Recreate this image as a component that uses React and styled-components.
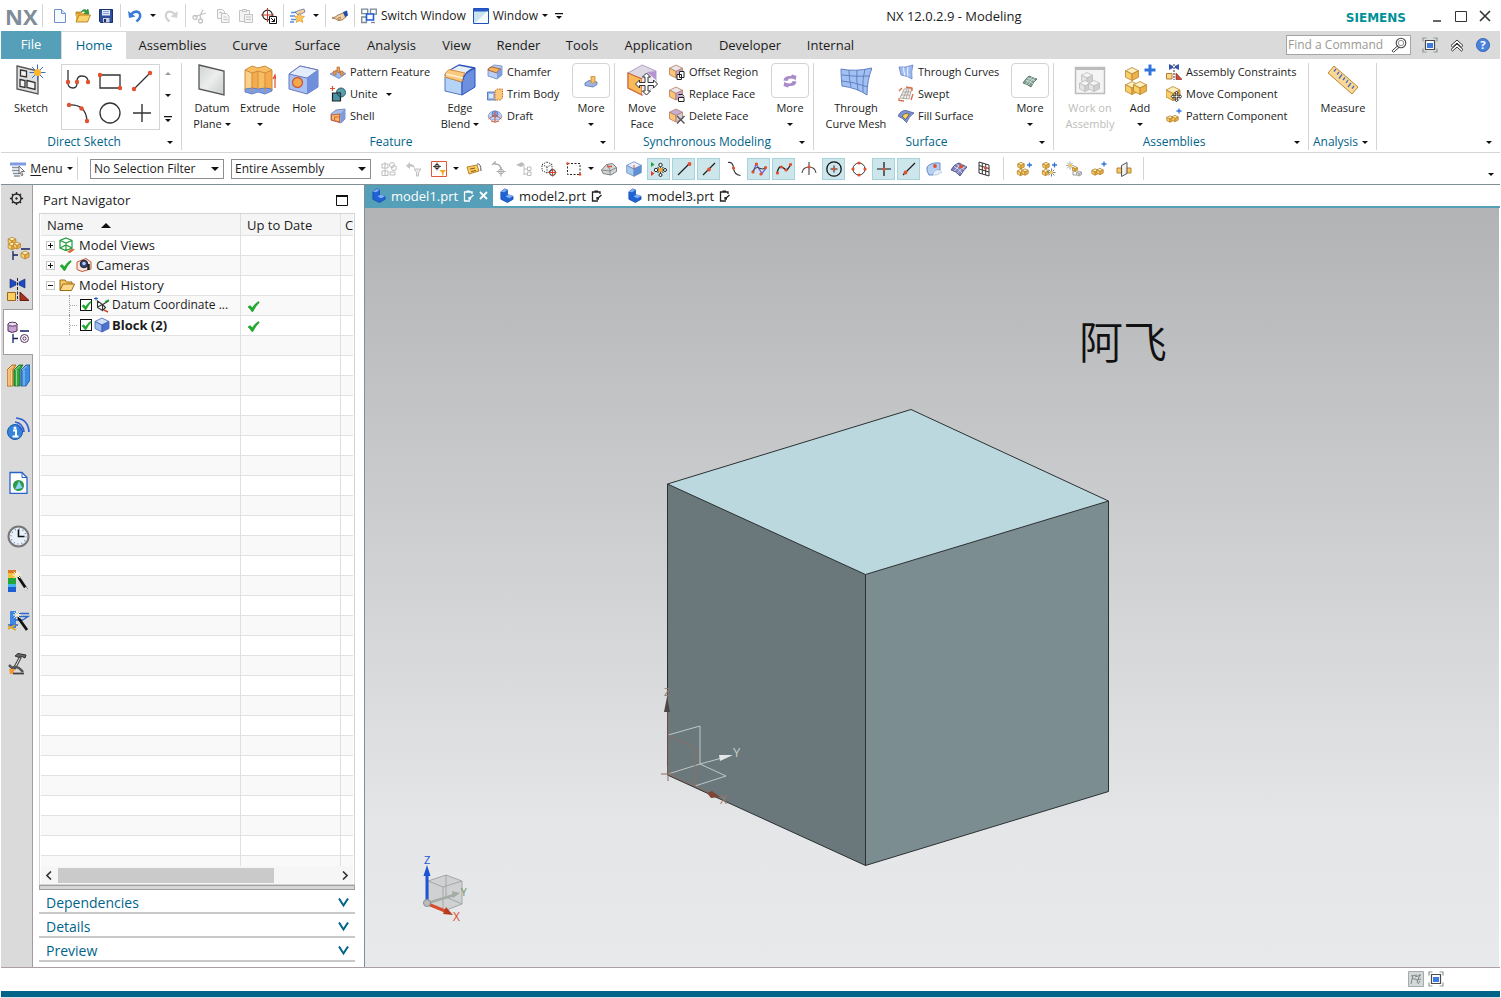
import { Fragment } from "react";
import styled, { createGlobalStyle, css } from "styled-components";

const colors = {
  teal: "#559fb8",
  link: "#00648a",
  bar: "#dadada",
  line: "#d4d4d4",
  frame: "#7f9094",
  text: "#1c1c1c",
};

const GlobalStyle = createGlobalStyle`
  * {
    box-sizing: border-box;
  }

  body {
    margin: 0;
    background: #fff;
    color: ${colors.text};
    font-family: "Open Sans", "Noto Sans", "Noto Sans CJK SC", sans-serif;
    font-size: 12px;
    line-height: 16px;
  }

  button,
  input,
  select {
    font: inherit;
    color: inherit;
  }

  button {
    padding: 0;
    border: 0;
    background: none;
    white-space: nowrap;
  }

  svg {
    display: block;
    flex: none;
  }
`;

/* ---------- drawing helpers ---------- */

const Svg = ({ s = 16, v = 16, children }) => (
  <svg width={s} height={s} viewBox={`0 0 ${v} ${v}`} fill="none" aria-hidden="true">
    {children}
  </svg>
);

const Iso = ({ x, y, r, c = ["#fdeebb", "#f9cf6a", "#eeb04a"], k = "#b8842c", w = 0.8 }) => (
  <g stroke={k} strokeWidth={w} strokeLinejoin="round">
    <path d={`M${x} ${y - r}l${r} ${r / 2}l${-r} ${r / 2}l${-r} ${-r / 2}z`} fill={c[0]} />
    <path d={`M${x - r} ${y - r / 2}l${r} ${r / 2}v${r}l${-r} ${-r / 2}z`} fill={c[1]} />
    <path d={`M${x + r} ${y - r / 2}l${-r} ${r / 2}v${r}l${r} ${-r / 2}z`} fill={c[2]} />
  </g>
);

const grey = ["#f4f4f4", "#e4e4e4", "#cfcfcf"];

const Dot = ({ x, y, r = 1.6 }) => <circle cx={x} cy={y} r={r} fill="#e2502d" />;

const Plus = ({ x, y, r = 2.5, c = "#2f74dd", w = 1.3 }) => (
  <path d={`M${x - r} ${y}h${2 * r}M${x} ${y - r}v${2 * r}`} stroke={c} strokeWidth={w} />
);

/* four-way move arrow, drawn on a 22 unit grid */
const Four = ({ x, y, r }) => (
  <g transform={`translate(${x} ${y}) scale(${r / 11})`}>
    <path
      d="M0-11L4-7H1.500V-1.500H7V-4L11 0L7 4V1.500H1.500V7H4L0 11L-4 7H-1.500V1.500H-7V4L-11 0L-7-4V-1.500H-1.500V-7H-4z"
      fill="#fff"
      stroke="#333"
      strokeWidth={11 / r}
      strokeLinejoin="round"
    />
  </g>
);

const Burst = ({ x, y, r, c = "#ffb52e", k = "#3a6fc0" }) => (
  <g transform={`translate(${x} ${y})`}>
    <path
      d={`M0 ${-r}V${r}M${-r} 0H${r}M${-r * 0.7} ${-r * 0.7}L${r * 0.7} ${r * 0.7}M${r * 0.7} ${-r * 0.7}L${-r * 0.7} ${r * 0.7}`}
      stroke={k}
      strokeWidth="1"
    />
    <circle r={r * 0.45} fill={c} />
  </g>
);

const Check = ({ s = 13 }) => (
  <Svg s={s} v={13}>
    <path d="M1 7l2-1.500 2.400 2.300Q8 3.500 11.500 1.500l.8.9Q8.500 6 6 11.500H4.800Q3.300 8.800 1 7z" fill="#1fae2b" stroke="#128a1e" strokeWidth=".5" />
  </Svg>
);

const Caret = ({ w = 6 }) => (
  <svg width={w} height={w / 2} viewBox="0 0 6 3" aria-hidden="true">
    <path d="M0 0h6L3 3z" fill="#111" />
  </svg>
);

const CaretBar = () => (
  <svg width="8" height="6" viewBox="0 0 8 6" aria-hidden="true">
    <path d="M0 0h8v1.200H0zM1 3h6L4 6z" fill="#111" />
  </svg>
);

/* ---------- icons ---------- */

const icons = {
  newFile: (
    <>
      <path d="M2.500 1.500h7l4 4v9h-11z" fill="#f7faff" stroke="#6d8fd0" />
      <path d="M9.500 1.500v4h4" fill="#d6e3fb" stroke="#6d8fd0" />
    </>
  ),
  open: (
    <>
      <path d="M1 4h5l1 1.500h6V8H1z" fill="#d99b28" stroke="#a87418" strokeWidth=".7" />
      <path d="M1 14V6h3l2-1h7v9z" fill="#f0b640" />
      <path d="M1 14l3-7h11.500l-3 7z" fill="#fbd36d" stroke="#a87418" strokeWidth=".8" />
      <path d="M6 4q3-4 5.500-1.500L13 1l1 5-5-.5 1.500-1.300Q9 2.500 6 4z" fill="#2ba13a" stroke="#1b6b25" strokeWidth=".5" />
    </>
  ),
  save: (
    <>
      <path d="M1.500 1.500h13v13h-12l-1-1z" fill="#2d4f9e" stroke="#172f6b" />
      <path d="M4 2h8v5.500H4z" fill="#dfe9f8" />
      <path d="M5 3.500h6M5 5.500h6" stroke="#8da6cf" />
      <path d="M5 10h6.500v4.500H5z" fill="#c9ced8" />
      <path d="M6 11h2v3H6z" fill="#172f6b" />
    </>
  ),
  undo: (
    <>
      <path d="M4 6.500q4-4.500 8-2 3.500 4-2.500 9" stroke="#3b7ad8" strokeWidth="2.600" />
      <path d="M1 3l1 7 6.500-1.500z" fill="#3b7ad8" />
    </>
  ),
  redo: (
    <>
      <path d="M12 6.500q-4-4.500-8-2-3.500 4 2.500 9" stroke="#d2d2d2" strokeWidth="2.300" />
      <path d="M15 3l-1 7-6.500-1.500z" fill="#d2d2d2" />
    </>
  ),
  cut: (
    <g stroke="#c4c4c4" strokeWidth="1.300">
      <path d="M8 8L11 1.500M3 8.500l11-3.500M8 8l1 3" />
      <circle cx="3" cy="9.500" r="2" />
      <circle cx="8.500" cy="13" r="2" />
    </g>
  ),
  copy: (
    <g stroke="#c4c4c4" fill="#f6f6f6">
      <path d="M2.500 1.500h5l2 2v7h-7z" />
      <path d="M6.500 5.500h5l2.500 2.500v6.500H6.500z" />
      <path d="M8.500 9h3M8.500 11.500h4M4 4.500h3" />
    </g>
  ),
  paste: (
    <g stroke="#c4c4c4" fill="#f3f3f3">
      <path d="M1.500 2.500h10v11h-10z" />
      <path d="M4.500 1.500h4v2h-4z" />
      <path d="M6.500 6.500h8v8h-8z" />
      <path d="M8 9h5M8 11.500h5" />
    </g>
  ),
  target: (
    <>
      <circle cx="6.500" cy="7" r="4.800" stroke="#222" strokeWidth="1.200" />
      <path d="M6.500 0v14M0 7h13" stroke="#c63c2c" />
      <path d="M8.500 8.500h7v7h-7z" fill="#fff" stroke="#111" />
      <path d="M10 10l3.500 3.500m0-3v3h-3" stroke="#111" />
    </>
  ),
  star: (
    <>
      <path d="M1 4.500h7M0 8h5M1 11.500h5M0 14h4" stroke="#5b8fdc" strokeWidth="1.300" />
      <path d="M5 4l5-2 4-1 1 3-4 2-3 1z" fill="#f3cf9b" stroke="#4a68a8" strokeWidth=".7" />
      <path d="M9.500 5l1.500 3 3.500.4-2.500 2.400.8 3.700-3.300-1.800-3.300 1.800.8-3.700L4.500 8.400 8 8z" fill="#ffc95c" stroke="#d78a17" strokeWidth=".6" />
    </>
  ),
  hand: (
    <>
      <path d="M0 10q4-1 6-3l5-2 3 1v3l-4 3-4 .5-2-1.500z" fill="#f2d2a4" stroke="#8a6336" strokeWidth=".8" />
      <path d="M11 4l4-1.500 1 5L13 9z" fill="#1d4ea8" />
      <path d="M5 10.500l4-1.500M6 12l3-1.500" stroke="#8a6336" strokeWidth=".7" />
    </>
  ),
  switchWin: (
    <>
      <path d="M.7 1.200h6v4.500h-6zM9.500 1.200h5.800v5H9.500zM.7 9H5.500v5.500H.7z" stroke="#7a8898" strokeWidth="1.300" />
      <path d="M5.500 6h7v6h-7z" fill="#fff" stroke="#1f5fd1" strokeWidth="1.600" />
      <path d="M10 14.500h4" stroke="#7a8898" strokeWidth="1.300" />
    </>
  ),
  windowIcon: (
    <>
      <path d="M.5.5h15v15H.5z" fill="#c9e4ee" stroke="#1f4fc0" />
      <path d="M1 1h14v2.500H1z" fill="#2759c7" />
      <path d="M2 15L14 3.500h1V15z" fill="#f4fafc" />
    </>
  ),
  search: (
    <>
      <circle cx="10" cy="6" r="4.800" fill="#fff" stroke="#444" strokeWidth="1.100" />
      <circle cx="10" cy="6" r="2.700" stroke="#777" strokeWidth=".8" />
      <path d="M7 8.500L1 13.800l1.500 1.500L8.500 10" stroke="#444" />
    </>
  ),
  full: (
    <>
      <path d="M1 4.500V1h3.500M11.500 1H15v3.500M1 11.500V15h3.500M11.500 15H15v-3.500" stroke="#8c9b98" strokeWidth="1.200" />
      <path d="M3.500 3.500h9v9h-9z" fill="#fff" stroke="#4a4a4a" strokeWidth="1.200" />
      <path d="M5 6h6v5H5z" fill="#3d7be0" />
    </>
  ),
  up: <path d="M2 8.500L8 3l6 5.500-1.600 1.600L8 6 3.600 10zM2 12.500L8 7l6 5.500-1.600 1.600L8 10l-4.400 4z" fill="#fff" stroke="#333" />,
  pattern: (
    <>
      <path d="M0 10l7-4 9 3.500-7 5z" fill="#9db9ee" stroke="#5b78ba" strokeWidth=".7" />
      <path d="M3.500 10.500V7H6v4zM7 8V3h2.500v6zM10.500 11V7H13v4.500z" fill="#f59a45" stroke="#bb6a2a" strokeWidth=".7" />
    </>
  ),
  unite: (
    <>
      <circle cx="11" cy="6.500" r="4.500" fill="#5b9fae" stroke="#2f6270" />
      <path d="M2.500 7h8v8h-8z" fill="#4893a6" stroke="#222" strokeWidth="1.200" />
      <path d="M7 7h3.500v4Q7.500 10 7 7z" fill="#387f90" stroke="#222" strokeWidth=".6" />
      <Plus x={2.5} y={2.5} r={2.5} c="#e2502d" w={1.2} />
    </>
  ),
  shell: (
    <>
      <path d="M1 6l5-4 9-1v10l-4 4-10-3z" fill="#a8bdec" stroke="#6878b0" strokeWidth=".8" />
      <path d="M10 6l5-5v10l-4 4z" fill="#7f9bdc" />
      <path d="M1.500 7l8-1v8l-8-2z" fill="#f9bb6c" stroke="#cc6037" strokeWidth="1.100" />
      <path d="M4.500 12V9h4" stroke="#cc6037" />
    </>
  ),
  chamfer: (
    <>
      <path d="M1 5l6-4 8 1v9l-5 4-9-3z" fill="#b9cff5" stroke="#5a76b4" strokeWidth=".7" />
      <path d="M1 6q1-3 4-3l9 2q-4 1-4 4z" fill="#f9b25e" stroke="#9f5a2c" strokeWidth=".9" />
      <path d="M10 9q1-3 5-4v6l-5 4z" fill="#7d9ee2" />
    </>
  ),
  trim: (
    <>
      <path d="M.5 6h9v8h-9z" fill="#9bb8ed" stroke="#4867ac" strokeWidth=".8" />
      <path d="M2 8h4v4H2z" fill="#dfe9fb" />
      <path d="M8 5l2-2h5.500v9l-2 2H8z" fill="#fbc878" stroke="#c1642a" strokeDasharray="1.500 1" />
    </>
  ),
  draft: (
    <>
      <path d="M1 9q1-6 7-6t7 6l-3 3H4z" fill="#c0d1f4" stroke="#7d8fc4" strokeWidth=".8" />
      <circle cx="8" cy="6" r="3" fill="#7e9fe0" stroke="#5670b5" strokeWidth=".7" />
      <path d="M8 4v10M1.500 11l6-4M14.500 11l-6-4M4 13q4 2.500 8 0" stroke="#cf5a36" strokeWidth="1" />
    </>
  ),
  moreFeature: (
    <>
      <path d="M2 10l4-2.500 8 1.500v2.500L10 14l-8-1.500z" fill="#9cb5e8" stroke="#5471b3" strokeWidth=".8" />
      <path d="M8 10V3.500h4V9q-2 2-4 1z" fill="#fbc06c" stroke="#c48530" strokeWidth=".8" />
    </>
  ),
  offset: (
    <>
      <Iso x={7} y={7.500} r={6.500} c={["#e9e7ec", "#fbc678", "#bfa8d6"]} k="#b87a5c" />
      <path d="M10.500 7.500h4.500v6h-4.500zM8 10.500h4.500v5H8z" fill="#fff" stroke="#222" />
    </>
  ),
  replace: (
    <>
      <Iso x={7} y={7.500} r={6.500} c={["#e9e7ec", "#fbc678", "#bfa8d6"]} k="#b87a5c" />
      <path d="M9.500 8.500h4l1.500 2M9.500 11.500H15v4H9.500z" fill="#fff" stroke="#222" />
    </>
  ),
  deleteFace: (
    <>
      <Iso x={7} y={7.500} r={6.500} c={["#c3aedb", "#fbc678", "#d3ccdd"]} k="#b87a5c" />
      <path d="M8 8l7.500 7.500M15.500 8L8 15.500" stroke="#555" strokeWidth="1.400" />
    </>
  ),
  moreSync: (
    <>
      <path d="M1.500 7.500Q2 2.500 9 3l1-1.500L14.500 3l-1 4.500L12 6Q6 4.500 5.500 8z" fill="#a88bc8" />
      <path d="M14.500 8.500Q14 13.500 7 13l-1 1.500L1.500 13l1-4.500L4 10q6 1.500 6.500-2z" fill="#a88bc8" />
    </>
  ),
  curves: (
    <>
      <path d="M1 3q6 1 14-2-2 6-1 14-4-3-11-4Q2 7 1 3z" fill="#9dbaf0" stroke="#6682c4" strokeWidth=".8" />
      <path d="M5.500 3.500q0 4 1.500 8M10 3q-1 5 0 9.500" stroke="#e8f0ff" strokeWidth="1.200" />
    </>
  ),
  swept: (
    <>
      <path d="M2 12L6 3l8-1-3 11z" fill="#f2f0ee" stroke="#9a8f88" strokeWidth=".7" />
      <path d="M5 13l4-10M8 13l3-10M3 9h9M5 6h8" stroke="#9a8f88" strokeWidth=".7" />
      <path d="M1 5l3-3M8 1l6 1v3M1 12v2.500l5 .5M15 8l-2 6" stroke="#dc6a45" strokeWidth="1.300" />
    </>
  ),
  fill: (
    <>
      <path d="M0 8q3-6 8-5.500L16 5q-5 3-7.500 9.500Q5 10 0 8z" fill="#7c93d6" stroke="#4a5c9c" strokeWidth=".8" />
      <path d="M4 8q3-4 7.500-2-2 2.500-4 5.500z" fill="#ffd35b" stroke="#4b4b4b" strokeWidth=".7" />
    </>
  ),
  moreSurface: (
    <>
      <path d="M1 10q3-5 6-7 4 2 8 3-4 3-6 8-4-3-8-4z" fill="#7f9f90" stroke="#4d6a5d" strokeWidth=".8" />
      <path d="M3.500 7q5 1 7.500 4M5 5q5 1 8 3M4 11q2-5 6.500-7M6.500 12q2-5 6.500-7" stroke="#d7e6de" strokeWidth=".8" />
    </>
  ),
  constraints: (
    <>
      <path d="M3 0v6l4-2V2zM13 0v6L9 4V2z" fill="#3454b0" />
      <path d="M8 0v16" stroke="#333" strokeDasharray="2 1" />
      <path d="M.5 9.500H6V15H.5z" fill="#fbd68a" stroke="#b07e34" />
      <path d="M10 9v6.500h6z" fill="#d0493a" stroke="#7e2116" strokeWidth=".6" />
    </>
  ),
  moveComp: (
    <>
      <Iso x={7} y={7.500} r={7} />
      <Four x={10.500} y={10.500} r={5.300} />
    </>
  ),
  patternComp: (
    <>
      <Iso x={4} y={11} r={3.200} />
      <Iso x={9} y={10.500} r={3.200} />
      <Plus x={13} y={3} />
    </>
  ),
  menu: (
    <>
      <path d="M2 6.500h8M2 9.500h7M3 12.500h6M4 15h6" stroke="#8492a4" strokeWidth="1.400" />
      <path d="M0 1.500h16v3H0z" fill="#7e9ae0" />
      <path d="M9 5l5.500 5.500h-3l1.500 3.500-1.500.7L10.300 11.500 9 13z" fill="#f4f4f4" stroke="#555" strokeWidth=".8" />
    </>
  ),
  ghost1: (
    <g stroke="#bdbdbd">
      <path d="M4 1v14M1 3h6v4H1zM1 10h6v4.500H1z" />
      <circle cx="11" cy="4" r="2.500" />
      <circle cx="13" cy="7" r="2.500" />
      <path d="M9 11h5v3H9z" />
    </g>
  ),
  ghost2: (
    <>
      <path d="M0 5l4-4v2q4 0 5 4-2-1.500-5-1.500v2.500z" fill="#c4c4c4" />
      <path d="M8 8h7l-2.500 3.500V15h-2v-3.500z" fill="#ececec" stroke="#c0c0c0" />
    </>
  ),
  filter: (
    <>
      <path d="M.5.5h15v15H.5z" fill="#fff" stroke="#e0583a" />
      <circle cx="6" cy="5.500" r="2.200" stroke="#222" />
      <path d="M6 1.500v8M2 5.500h8" stroke="#222" strokeWidth=".8" />
      <path d="M8.500 9H15l-2.500 3v2.500h-1.500V12z" fill="#f7a928" />
    </>
  ),
  ticket: (
    <>
      <path d="M1 6l10-2 2 6-10 3z" fill="#fbcb62" stroke="#b8842c" />
      <path d="M4 8l5-1M5 10.500l5-1" stroke="#8a5a12" />
      <path d="M11 3q4-1 4 7" stroke="#555" />
    </>
  ),
  ghost3: (
    <>
      <path d="M1 4l3-3v2q6 0 6 6" stroke="#aaa" strokeWidth="1.300" />
      <circle cx="10" cy="10.500" r="2.500" stroke="#aaa" />
      <path d="M10 6v9.500M5.500 10.500h9" stroke="#aaa" />
    </>
  ),
  ghost4: (
    <>
      <path d="M0 4l6-3 3 3-4 2z" fill="#bcbcbc" />
      <path d="M8 5v9M8 8h3M8 13h3M11.500 6h3.500v3.500h-3.500zM11.500 11h3.500v3.500h-3.500z" stroke="#bcbcbc" />
    </>
  ),
  dotCube: (
    <>
      <path d="M6 1l5 2.500v6L6 12 1 9.500v-6zM1 3.500L6 6l5-2.500M6 6v6" stroke="#333" strokeDasharray="1.200 1.200" />
      <circle cx="11.500" cy="11.500" r="3" stroke="#222" />
      <path d="M11.500 7.500v8M7.500 11.500h8" stroke="#e03b25" />
    </>
  ),
  marquee: (
    <>
      <path d="M1.500 2.500h12.500v11H1.500z" stroke="#222" strokeDasharray="2 1.500" />
      <Dot x={1.5} y={2.5} r={1.3} />
      <Dot x={14} y={13.500} r={1.3} />
    </>
  ),
  facet: (
    <>
      <path d="M.5 9l5-5.500 6-1 4 4v4L10 14l-8-1.500z" fill="#d2d6d8" stroke="#666" strokeWidth=".8" />
      <path d="M.5 9L9 10l6.500-3.500M9 10v4M6 3.500L9.500 10" stroke="#777" strokeWidth=".8" />
      <path d="M6 5.500h5" stroke="#e2502d" strokeWidth="1.500" />
    </>
  ),
  blueCube: (
    <>
      <Iso x={8} y={8} r={7.3} c={["#e8f1fb", "#a5cbee", "#5d90d6"]} k="#6d8ac0" />
      <path d="M8 4v4" stroke="#d8452a" />
    </>
  ),
  dots: (
    <>
      <path d="M0 1v5l3.500-2.500z" fill="#20a338" />
      <path d="M0 10v5l3.500-2.500z" fill="#e03b25" />
      <g fill="#fff" stroke="#222">
        <path d="M9.500 4v10M5 9h9M6.500 6l6 6M12.500 6l-6 6" />
        <circle cx="9.500" cy="4" r="1.700" />
        <circle cx="9.500" cy="14" r="1.500" />
        <circle cx="5" cy="9" r="1.700" />
        <circle cx="14" cy="9" r="1.500" />
      </g>
      <circle cx="9.500" cy="9" r="2.200" fill="#f4a72d" />
    </>
  ),
  endpoint: (
    <>
      <path d="M2 14L13 3" stroke="#222" strokeWidth="1.200" />
      <Dot x={13.500} y={3} r={1.900} />
    </>
  ),
  midpoint: (
    <>
      <path d="M2 14L14 2" stroke="#222" strokeWidth="1.200" />
      <Dot x={8} y={8.500} r={1.900} />
    </>
  ),
  curvePt: (
    <>
      <path d="M2 1.500q5-1 5.500 5.500t7 7.500" stroke="#333" strokeWidth="1.200" />
      <Dot x={7.500} y={7} />
    </>
  ),
  zigzag: (
    <>
      <path d="M2 12L5 3l6 9.500 4-5.500" stroke="#7a5ac8" strokeWidth="1.300" />
      <path d="M1 11q4-6 7-4t7 0" stroke="#333" strokeWidth="1" />
      <Dot x={2} y={11} />
      <Dot x={5.500} y={3} />
      <Dot x={10} y={13} />
      <Dot x={14.500} y={6.500} />
    </>
  ),
  spline: (
    <>
      <path d="M1 12Q3 4 6 6t4 3 5-6" stroke="#222" strokeWidth="1.300" />
      <Dot x={1.500} y={12} />
      <Dot x={5.500} y={6} />
      <Dot x={10} y={9} />
      <Dot x={14.500} y={3.500} />
    </>
  ),
  intersect: (
    <>
      <path d="M1 12Q2 6 8 6t7 6M8 1v13" stroke="#444" strokeWidth="1.100" />
      <Dot x={8} y={6} />
    </>
  ),
  circleC: (
    <>
      <circle cx="8" cy="8" r="7.200" stroke="#111" strokeWidth="1.300" />
      <path d="M8 4.500v7M4.500 8h7" stroke="#222" />
      <Dot x={8} y={8} />
    </>
  ),
  quadrant: (
    <>
      <circle cx="8" cy="8" r="6" stroke="#333" />
      <Dot x={8} y={2} />
      <Dot x={8} y={14} />
      <Dot x={2} y={8} />
      <Dot x={14} y={8} />
    </>
  ),
  cross: (
    <>
      <path d="M8 1v14M1 8h14" stroke="#111" strokeWidth="1.200" />
      <Dot x={8} y={8} r={1.500} />
    </>
  ),
  onCurve: (
    <>
      <path d="M2 14L14 2" stroke="#222" strokeWidth="1.200" />
      <Dot x={4.500} y={11.500} r={1.900} />
    </>
  ),
  face: (
    <>
      <path d="M1 6q4-5 13-4v7q-6-1-7 5H3Q0 10 1 6z" fill="#b5d0f3" stroke="#5b85ca" strokeWidth=".9" />
      <path d="M7 14q0-6 7-5l2 2-5 3z" fill="#e4edf7" stroke="#a9b8cc" strokeWidth=".6" />
      <Dot x={9} y={5} r={1.9} />
    </>
  ),
  grid: (
    <>
      <path d="M0 9q3-6 8-7l8 4q-4 4-7 9-4-5-9-6z" fill="#7f83bd" stroke="#3b3d72" strokeWidth=".8" />
      <path d="M3 5.500q5 2 8 6.500M5.500 3.500q5 2 8 5.500M3.500 10q3-5 8-6.500M6.500 12q3-5 8-6.500" stroke="#e7e7fa" strokeWidth=".8" />
      <Dot x={10} y={5.500} r={2} />
    </>
  ),
  mesh: (
    <>
      <path d="M3 1l10 3v11L3 12zM3 4.500l10 3M3 8l10 3M6.300 2v11M9.700 3v11" stroke="#333" />
      <Dot x={9.500} y={7} />
    </>
  ),
  add: (
    <>
      <Iso x={5} y={4.500} r={3.200} />
      <Iso x={4.500} y={11.500} r={3.200} />
      <Iso x={9} y={11} r={3.200} />
      <Plus x={13.500} y={4} />
    </>
  ),
  addNew: (
    <>
      <Iso x={5} y={4.500} r={3.200} />
      <Iso x={4.500} y={11.500} r={3.200} />
      <Plus x={13.500} y={4} />
      <Burst x={10.500} y={11.500} r={4} c="#f5c95a" k="#6d7f96" />
    </>
  ),
  tree: (
    <>
      <Burst x={4} y={4.500} r={4} c="#f5c95a" k="#9aa8ba" />
      <path d="M7 8v6h4" stroke="#999" />
      <Iso x={9} y={8} r={2.500} />
      <Iso x={13} y={12.500} r={2.500} c={grey} k="#999" />
    </>
  ),
  mirror: (
    <>
      <path d="M1 7h5v5H1zM10 7h5v5h-5z" fill="#f8c768" stroke="#b8842c" />
      <path d="M5.500 4.500l5.500-3v11l-5.500 3z" fill="#eceeef" fillOpacity=".8" stroke="#555" />
    </>
  ),
  part: (
    <>
      <path d="M2 4l4-3 3 1v5l3 1 3 1v3l-6 3.500L2 12z" fill="#1f62d4" stroke="#1348a8" strokeWidth=".8" />
      <path d="M2 4l4-3 3 1-3.500 2.500zM7 9l3-2 5 1.500-4 2.500z" fill="#7fb0f8" />
    </>
  ),
  gear: (
    <g stroke="#222" strokeWidth="1.500">
      <circle cx="8" cy="8" r="4.800" />
      <circle cx="8" cy="8" r="1" fill="#222" strokeWidth=".5" />
      <path d="M8 1v2.200M8 12.800V15M1 8h2.200M12.800 8H15M3.200 3.200l1.300 1.300M11.500 11.500l1.300 1.300M12.800 3.200l-1.300 1.300M4.500 11.500l-1.300 1.300" />
    </g>
  ),
  views: (
    <>
      <path d="M8 15l5-3.500 3 1-5 3.500z" fill="#e2683a" />
      <path d="M7 1l6 2.500v7.500L7 13.500 1 11V3.500zM1 3.500L7 6l6-2.500M7 6v7.500M1 11l6-3 6 3" fill="#fff" fillOpacity=".6" stroke="#1f9d3a" strokeWidth="1.200" />
    </>
  ),
  camera: (
    <>
      <path d="M1 5l9-3.500L15 5v7l-9 2.500-5-2z" fill="#fbe6de" stroke="#c65a3a" />
      <circle cx="8" cy="7" r="3.800" fill="#31427e" stroke="#222" />
      <circle cx="8" cy="6.500" r="1.700" fill="#b9cdf5" />
      <path d="M12.500 7v6" stroke="#222" strokeWidth="2.500" />
    </>
  ),
  folder: (
    <>
      <path d="M1 13V3h5l1.500 2H13v3" fill="#f6c765" stroke="#9c6b14" />
      <path d="M1 13.500l3-6.500h11.500l-3 6.500z" fill="#fbd98a" stroke="#9c6b14" />
    </>
  ),
  csys: (
    <>
      <path d="M3.500 4l5 3.500v6l-5-3zM3.500 10l6-3 5-3M8.500 7.500l3 3-3 3" stroke="#333" strokeWidth="1.100" />
      <path d="M0 1.500h4M2 0v3.500" stroke="#2457cf" />
      <path d="M11 5l4-2" stroke="#1f9d3a" strokeWidth="1.500" />
      <path d="M10 13l4 2" stroke="#d8452a" strokeWidth="1.500" />
    </>
  ),
  block: <Iso x={8} y={8} r={7} c={["#cfe0fb", "#9dbcf2", "#4a74cf"]} k="#4460a8" />,
  raster: (
    <>
      <path d="M.5.5h15v15H.5z" fill="#d5d8d8" stroke="#a5abab" />
      <path d="M3 13L5 4M3 5l6-1M4.500 7.500l4 1M9 12l3-9M7 6l6-2M8 9l5-1M10 13l2-3" stroke="#7f8888" />
    </>
  ),
  help: (
    <>
      <circle cx="8" cy="8" r="7.500" fill="#4a82da" stroke="#3564b4" />
      <text x="8" y="12.500" textAnchor="middle" fontSize="13" fontWeight="700" fill="#fff">?</text>
    </>
  ),
};

const Icon = ({ name, size = 16 }) => <Svg s={size}>{icons[name]}</Svg>;

const bigIcons = {
  sketch: (
    <>
      <path d="M2 2l21 5v23L2 25z" fill="#dfe1e1" stroke="#555" strokeWidth="1.300" />
      <path d="M5.500 6l6 1v6l-6-1zM5 15.500l5 1v7l-5-1zM12 16.500l8 2v7l-8-2z" fill="#f4f4f4" stroke="#333" strokeWidth="1.300" />
      <Burst x={22.500} y={8.500} r={8} />
    </>
  ),
  datum: <path d="M3 1l25 6v24L3 25z" fill="url(#plate)" stroke="#555" strokeWidth="1.300" />,
  extrude: (
    <>
      <path d="M1 27V6l7-4 6 2 7-2 7 4v21z" fill="#f9be62" />
      <path d="M1 6l7 3v19l-7-1z" fill="#fad08c" />
      <path d="M8 9l6-2v18l-6 3zM21 9l7-3v21l-7 1z" fill="#f5ac4c" />
      <path d="M1 25l7-1 6 1 7-1 7 1v2l-7 3-7-2-6 2-7-2z" fill="#7c9ee6" stroke="#5472ba" strokeWidth=".8" />
      <path d="M1 26V6l7-4 6 2 7-2 7 4v20M1 6l7 3 6-2 7 2 7-3M8 9v19M14 7v18M21 9v19" stroke="#cf8d3c" />
      <path d="M31 24V12m-2 3l2-4 1 4" stroke="#e2502d" strokeWidth="1.200" />
    </>
  ),
  hole: (
    <>
      <path d="M1 10l11-8 18 4v17l-11 7-18-5z" fill="#a9c0f4" stroke="#6b79c0" />
      <path d="M1 10l18 4 11-8-18-4z" fill="#e2ecfc" stroke="#6b79c0" />
      <path d="M19 14l11-8v17l-11 7z" fill="#6f8fdc" />
      <circle cx="9.500" cy="18.500" r="5" fill="#f3a94a" stroke="#c85a3a" strokeWidth="1.300" />
    </>
  ),
  edge: (
    <>
      <path d="M1 13v14l17 4V18z" fill="#b5d3f4" stroke="#5577bb" />
      <path d="M18 31V17Q20 8 31 4v19z" fill="#6d8fe0" stroke="#2b50b8" />
      <path d="M1 11Q3 7 15 1l16 3Q20 7 18 18z" fill="#e6eef6" stroke="#2b50b8" strokeWidth="1.300" />
      <path d="M1 13Q1 8 5 5.500L21 9q-3 3-3 9z" fill="#fbca80" stroke="#d09040" />
      <path d="M2 10l17 4" stroke="#fff0cf" strokeWidth="1.500" />
    </>
  ),
  moveFace: (
    <>
      <path d="M2 9L16 1l14 6v15l-14 9-14-7z" fill="#dcd9e4" stroke="#b3a0c4" />
      <path d="M2 9l14 6v16L2 24z" fill="#fbba5a" stroke="#cc6d40" strokeWidth="1.300" />
      <path d="M16 15L30 7v15l-14 9z" fill="#efedf2" />
      <path d="M21 8l9-1v9z" fill="#b495d0" />
      <Four x={20.500} y={20} r={11} />
    </>
  ),
  curveMesh: (
    <>
      <path d="M1 5q14 3 31-1-5 12-5 27-10-7-25-9Q1 13 1 5z" fill="#a2c0f2" stroke="#5f80c4" />
      <path d="M9 6q0 9 2 17M17 6q-1 10 1 20M25 5q-3 10-2 23M2 11q14 2 27 1M2 17q12 1 26 6" stroke="#5f80c4" />
    </>
  ),
  work: (
    <>
      <path d="M1.500 3.500h29v26h-29z" fill="#f4f4f4" stroke="#bcbcbc" strokeWidth="1.500" />
      <path d="M1 3h30v3H1z" fill="#bcbcbc" />
      <Iso x={13} y={14} r={5.500} c={grey} k="#bcbcbc" />
      <Iso x={11} y={22} r={5.500} c={grey} k="#bcbcbc" />
      <Iso x={20} y={22} r={5.500} c={grey} k="#bcbcbc" />
    </>
  ),
  addBig: (
    <>
      <Iso x={8} y={10} r={6.500} />
      <Iso x={8} y={24} r={6.500} />
      <Iso x={16} y={24} r={6.500} />
      <Plus x={26} y={6} r={5.500} w={3} />
    </>
  ),
  measure: (
    <>
      <path d="M7 2l24 21-6 7L1 9z" fill="#fbd896" stroke="#b8893a" />
      <path d="M9 5l-2 2.500M12 8l-2 2.500M15 10.500l-3 4M18 13.500l-2 2.500M21 16l-2 3M24 19l-3 4M27 22l-2 2.500" stroke="#4a6cc0" strokeWidth="1.300" />
    </>
  ),
};

const BigIcon = ({ name }) => (
  <Svg s={32} v={32}>
    <defs>
      <linearGradient id="plate" x1="0" y1="0" x2="1" y2="1">
        <stop offset="0" stopColor="#d0d4d4" />
        <stop offset=".5" stopColor="#eceded" />
        <stop offset="1" stopColor="#c8cccc" />
      </linearGradient>
    </defs>
    {bigIcons[name]}
  </Svg>
);

const sideIcons = {
  assembly: (
    <>
      <Iso x={5} y={4} r={3.800} />
      <Iso x={5} y={9} r={3.800} />
      <Iso x={10} y={8.500} r={3.500} />
      <path d="M14 12h9M6 14v9M6 18h5" stroke="#14215c" strokeWidth="1.300" />
      <Iso x={18} y={18} r={4} />
    </>
  ),
  constraint: (
    <>
      <path d="M3 1v9l6-3V4zM18 1v9l-6-3V4z" fill="#1d4bc0" stroke="#122c74" strokeWidth=".6" />
      <path d="M10.500 0v23" stroke="#222" strokeDasharray="3 1.500" />
      <path d="M.5 14.500H8.500v8H.5z" fill="#fccf63" stroke="#9b6615" />
      <path d="M13 14v8.500h9z" fill="#a8321f" stroke="#661a0e" />
    </>
  ),
  history: (
    <>
      <path d="M1 3v7q4 3 9 0V3z" fill="#c6a3d3" stroke="#57305f" />
      <ellipse cx="5.500" cy="3.200" rx="4.500" ry="2" fill="#eadcf0" stroke="#57305f" />
      <path d="M13 10h9M6 13v9M6 17.500h5" stroke="#14215c" strokeWidth="1.300" />
      <circle cx="17.500" cy="17.500" r="4" stroke="#57305f" />
      <circle cx="17.500" cy="17.500" r="1.600" stroke="#57305f" />
    </>
  ),
  books: (
    <>
      <path d="M0 6l5-5h4L6 6v16H0z" fill="#f4ac4c" stroke="#9a5d12" strokeWidth=".8" />
      <path d="M7 6l5-5h4l-3 5v16H7z" fill="#2fa93d" stroke="#176422" strokeWidth=".8" />
      <path d="M14 6l5-5h4v15l-4 6h-5z" fill="#3a8de0" stroke="#18509a" strokeWidth=".8" />
      <path d="M2 6v16M4.500 6v16M9.500 6v16M17 6v16M1 6l5-4M8 6l5-4M15 6l5-4" stroke="#fff" strokeOpacity=".5" />
    </>
  ),
  info: (
    <>
      <circle cx="8" cy="15" r="7.500" fill="#3584dc" stroke="#1a57a5" />
      <circle cx="8" cy="11" r="1.500" fill="#fff" />
      <path d="M6 13.500h3V19M5.500 19.500h6" stroke="#fff" strokeWidth="2" />
      <path d="M8 5q8 1 9 10M9 1q12 1 13 14M10 8q3 1 4.500 5" stroke="#2f5fd0" strokeWidth="1.700" />
    </>
  ),
  web: (
    <>
      <path d="M3 1.500h12l5 5v16H3z" fill="#fff" stroke="#2a62c8" strokeWidth="1.300" />
      <path d="M15 1.500v5h5" stroke="#2a62c8" />
      <circle cx="11.500" cy="14.500" r="5.500" fill="#2b9a48" />
      <path d="M12 10l3.500 7-7.500 1.500z" fill="#8fd3f3" />
    </>
  ),
  clock: (
    <>
      <circle cx="11.500" cy="11.500" r="10" fill="#e9f1fb" stroke="#777" strokeWidth="2" />
      <circle cx="11.500" cy="11.500" r="7.500" stroke="#7e8ca6" strokeDasharray="1 2.930" strokeWidth="1.500" />
      <path d="M11.500 4.500v7h6" stroke="#111" strokeWidth="1.600" />
    </>
  ),
  palette: (
    <>
      <path d="M1 1h8v4H1z" fill="#dc7a2a" />
      <path d="M1 4h8v5H1z" fill="#f2c03c" />
      <path d="M1 9h8v6H1z" fill="#22a53a" />
      <path d="M1 15h8v3H1z" fill="#42b4e8" />
      <path d="M1 18h8v5H1z" fill="#1d5fd0" />
      <path d="M10 6l10 15" stroke="#111" strokeWidth="2.800" />
      <path d="M18 18.500l2 3" stroke="#ddd" strokeWidth="2.800" />
      <Burst x={10} y={6} r={4.500} c="#fff2c0" k="#fff" />
    </>
  ),
  process: (
    <>
      <path d="M3 2h6v17H3z" fill="#3f87e0" />
      <path d="M8 4.500h14M12 7.500l9 0-6 4M8 11h8M1 16h10" stroke="#2d66c8" strokeWidth="1.300" />
      <path d="M1 20l7-4M1 17l8 4" stroke="#e2a82b" strokeWidth="1.500" />
      <path d="M10 7l10 14" stroke="#111" strokeWidth="2.800" />
      <Burst x={10} y={6} r={4} c="#fff2c0" k="#fff" />
    </>
  ),
  tools: (
    <>
      <path d="M8 4l3-2.500 8 1.500-1 3-3-1.500-3 1z" fill="#666" stroke="#333" />
      <path d="M13.500 5L7 17" stroke="#444" strokeWidth="3" />
      <path d="M13 6L7.500 16" stroke="#eee" strokeWidth="1" />
      <path d="M2 13l3 3q5-3 11 4" stroke="#555" strokeWidth="2.500" />
      <path d="M2 17h6l-2 5H3z" fill="#f29a38" />
      <path d="M6 21.500h11" stroke="#444" strokeWidth="1.800" />
    </>
  ),
};

/* ---------- layout ---------- */

const Window = styled.div`
  display: flex;
  flex-direction: column;
  height: 100vh;
  padding: 0 1px;
`;

const TitleBar = styled.header`
  display: flex;
  align-items: center;
  height: 31px;
  padding: 0 7px 0 4px;
`;

const Logo = styled.span`
  width: 37px;
  color: #7f8d98;
  font-size: 22px;
  font-weight: 700;
  line-height: 30px;
`;

const QuickGroup = styled.div`
  display: flex;
  align-items: center;
  gap: 7px;
  height: 23px;
  padding: 0 6px 0 9px;
  border-left: 1px solid ${colors.line};

  ${({ $tight }) =>
    $tight &&
    css`
      padding: 0 6px;
    `}
`;

const IconButton = styled.button`
  display: flex;
  align-items: center;
  justify-content: center;
  gap: 4px;
`;

const AppTitle = styled.h1`
  flex: 1;
  margin: 0;
  padding-right: 7px;
  text-align: center;
  font-size: 13px;
  font-weight: 400;
`;

const Brand = styled.span`
  padding: 4px 23px 0 0;
  color: #00909a;
  font-family: "DejaVu Sans", sans-serif;
  font-size: 12px;
  font-weight: 700;
`;

const WindowButtons = styled.div`
  display: flex;
  gap: 8px;
`;

const TabBar = styled.nav`
  display: flex;
  align-items: flex-end;
  height: 28px;
  background: ${colors.bar};
`;

const Tab = styled.button`
  height: ${({ $file }) => ($file ? 28 : 27)}px;
  width: ${({ $w }) => $w}px;
  margin-right: ${({ $file }) => ($file ? 1 : 0)}px;
  padding-bottom: 2px;
  background: ${({ $file, $active }) => ($file ? colors.teal : $active ? "#fff" : "none")};
  color: ${({ $file, $active }) => ($file ? "#fff" : $active ? colors.link : colors.text)};
  font-size: 13px;
`;

const TabTools = styled.div`
  display: flex;
  align-items: center;
  align-self: center;
  gap: 11px;
  margin-left: auto;
  padding-right: 10px;
`;

const SearchBox = styled.label`
  display: flex;
  align-items: center;
  width: 125px;
  height: 20px;
  padding-right: 2px;
  border: 1px solid #a5a5a5;
  background: #fff;

  input {
    width: 104px;
    padding: 0 1px;
    border: 0;
    background: none;
    outline: none;
  }

  input::placeholder {
    color: #9a9a92;
    opacity: 1;
  }
`;

const Ribbon = styled.section`
  display: flex;
  height: 94px;
  padding: 4px 0 2px;
  border-bottom: 1px solid ${colors.line};
`;

const Group = styled.div`
  display: flex;
  flex-direction: column;
  width: ${({ $w }) => $w}px;
  border-right: 1px solid ${colors.line};

  ${({ $rest }) =>
    $rest &&
    css`
      flex: 1;
      border-right: 0;
    `}
`;

const GroupBody = styled.div`
  display: flex;
  flex: 1;
  padding-left: 6px;
  font-size: 11px;
`;

const GroupLabel = styled.div`
  display: flex;
  align-items: center;
  height: 16px;
  padding-right: 8px;
  color: ${colors.link};

  span {
    flex: 1;
    text-align: center;
  }
`;

const BigButton = styled.button`
  display: flex;
  flex-direction: column;
  align-items: center;
  width: ${({ $w }) => $w}px;
  padding-top: 1px;
  color: ${({ disabled }) => (disabled ? "#bdbdb8" : "inherit")};

  span {
    display: flex;
    align-items: center;
    gap: 3px;
    height: 16px;
  }

  span:first-of-type {
    margin-top: 4px;
  }
`;

const MoreBox = styled.i`
  display: grid;
  place-items: center;
  width: 38px;
  height: 35px;
  margin: -1px 0 -2px;
  border: 1px solid ${colors.line};
  border-radius: 4px;
`;

const SmallColumn = styled.div`
  display: flex;
  flex-direction: column;
  width: ${({ $w }) => $w}px;
  padding-left: 6px;
`;

const SmallButton = styled.button`
  display: flex;
  align-items: center;
  gap: 4px;
  height: 22px;
  margin-top: -2px;
  margin-bottom: 2px;

  svg:last-child:not(:first-child) {
    margin-left: 4px;
  }
`;

const Gallery = styled.div`
  display: grid;
  grid-template-columns: repeat(3, 32px);
  place-items: center;
  width: 99px;
  height: 66px;
  margin: 1px 0 0 6px;
  border: 1px solid ${colors.line};
`;

const GalleryScroll = styled.div`
  display: flex;
  flex-direction: column;
  justify-content: space-between;
  align-items: center;
  width: 16px;
  height: 50px;
  margin-top: 9px;
`;

const SelectionBar = styled.section`
  display: flex;
  align-items: center;
  height: 32px;
  border-bottom: 1px solid ${colors.frame};
`;

const MenuButton = styled(IconButton)`
  width: 77px;
  height: 23px;
  padding-left: 5px;
  border-right: 1px solid ${colors.line};

  u {
    text-underline-offset: 2px;
  }
`;

const SelectWrap = styled.label`
  display: grid;
  align-items: center;
  width: ${({ $w }) => $w}px;
  margin-left: ${({ $gap }) => $gap}px;

  > * {
    grid-area: 1 / 1;
  }

  select {
    height: 20px;
    padding: 0 3px;
    border: 1px solid #8e8e92;
    border-radius: 0;
    background: #fff;
    appearance: none;
  }

  svg {
    justify-self: end;
    margin-right: 5px;
    pointer-events: none;
  }
`;

const ToolStrip = styled.div`
  display: flex;
  align-items: center;
  height: 23px;
  padding: 0 7px 0 ${({ $left }) => $left}px;
  border-right: 1px solid ${colors.line};
`;

const Tool = styled(IconButton)`
  width: 23px;
  height: 22px;
  margin: 0 1px;
  border: 1px solid ${({ $on }) => ($on ? "#a9d3da" : "transparent")};
  background: ${({ $on }) => ($on ? "#cde6eb" : "none")};
`;

const ToolCaret = styled(IconButton)`
  width: 10px;
  height: 22px;
`;

const EndCaret = styled(IconButton)`
  align-self: flex-end;
  margin-left: auto;
  padding: 0 6px 8px;
`;

const Main = styled.main`
  display: flex;
  flex: 1;
  min-height: 0;
  border-bottom: 1px solid #aaa0a4;
`;

const SideBar = styled.nav`
  display: flex;
  flex-direction: column;
  align-items: center;
  width: 32px;
  background: ${colors.bar};
  border-right: 1px solid #a39da0;
`;

const SideButton = styled.button`
  display: grid;
  place-items: center;
  width: 100%;
  height: ${({ $h }) => $h}px;
  margin-bottom: ${({ $after = 0 }) => $after}px;
  padding-left: ${({ $wide }) => ($wide ? 4 : 0)}px;

  ${({ $active }) =>
    $active &&
    css`
      width: 30px;
      align-self: flex-end;
      margin-right: -1px;
      padding: 0;
      background: #fff;
      border: 1px solid #a39da0;
      border-right: 0;
    `}
`;

const Panel = styled.aside`
  display: flex;
  flex-direction: column;
  width: 332px;
  padding: 0 9px 5px 6px;
  border-right: 1px solid ${colors.frame};
`;

const PanelTitle = styled.h2`
  display: flex;
  align-items: center;
  justify-content: space-between;
  height: 28px;
  margin: 0;
  padding: 2px 7px 0 4px;
  font-size: 13px;
  font-weight: 400;
`;

const TreeBox = styled.div`
  display: flex;
  flex: 1;
  flex-direction: column;
  min-height: 0;
  padding: 0 1px;
  border: 1px solid ${colors.line};
`;

const TreeArea = styled.div`
  flex: 1;
  min-height: 0;
  background:
    linear-gradient(#dddfe3, #dddfe3) 199px 0 / 1px 100% no-repeat,
    linear-gradient(#dddfe3, #dddfe3) 299px 0 / 1px 100% no-repeat,
    linear-gradient(#fff 0 19px, #e2e2e2 19px 20px, #f9f9f9 20px 39px, #e2e2e2 39px 40px) 0 22px / 100% 40px;
`;

const Tree = styled.table`
  width: 100%;
  border-spacing: 0;
  table-layout: fixed;
  font-size: 13px;

  th {
    height: 22px;
    padding: 1px 0 0 6px;
    border-right: 1px solid #dddfe3;
    border-bottom: 1px solid #e2e2e2;
    background: #f5f5f5;
    font-weight: 400;
    text-align: left;
    white-space: nowrap;
  }

  th:last-child {
    padding-left: 4px;
    border-right: 0;
  }

  td {
    height: 20px;
    padding: 0;
  }

  td + td {
    padding-left: 6px;
  }
`;

const Sorted = styled.span`
  display: flex;
  align-items: center;
  gap: 18px;
`;

const Node = styled.div`
  display: flex;
  align-items: center;
  gap: ${({ $leaf }) => ($leaf ? 2 : 4)}px;
  height: 20px;
  padding: 0 0 2px ${({ $leaf }) => ($leaf ? 28 : 5)}px;
  font-size: ${({ $leaf, $bold }) => ($leaf && !$bold ? 12 : 13)}px;
  font-weight: ${({ $bold }) => ($bold ? 700 : 400)};
  white-space: nowrap;
`;

const Expander = styled.button`
  display: grid;
  place-items: center;
  width: 9px;
  height: 9px;
  border: 1px solid #c6c6c6;
  background: #fff;
`;

const Twig = styled.i`
  width: 9px;
  height: 20px;
  border-left: 1px dotted #999;
  background: linear-gradient(90deg, #aaa 50%, transparent 50%) 0 10px / 2px 1px repeat-x;
`;

const Tick = styled.span`
  display: grid;
  place-items: center;

  > * {
    grid-area: 1 / 1;
  }

  input {
    width: 12px;
    height: 12px;
    margin: 0;
    border: 1px solid #111;
    background: #fff;
    appearance: none;
  }

  svg {
    pointer-events: none;
  }

  input:not(:checked) + svg {
    visibility: hidden;
  }
`;

const ScrollBar = styled.div`
  display: flex;
  align-items: center;
  justify-content: space-between;
  height: 18px;
  padding: 0 5px;
  background: #f6f6f6;

  i {
    width: 216px;
    height: 15px;
    margin: 0 auto 0 6px;
    background: #c9cac9;
  }
`;

const Splitter = styled.div`
  height: 5px;
  border: 1px solid #a0a0a0;
  background: #d6d6d6;
`;

const Section = styled.button`
  display: flex;
  align-items: center;
  justify-content: space-between;
  height: 24px;
  padding: 3px 6px 0 7px;
  border-bottom: 2px solid #c9c9c9;
  color: ${colors.link};
  font-size: 14px;
`;

const Work = styled.section`
  display: flex;
  flex: 1;
  flex-direction: column;
  min-width: 0;
`;

const FileTabs = styled.nav`
  display: flex;
  height: 23px;
  border-bottom: 2px solid ${colors.teal};
`;

const FileTab = styled.button`
  display: flex;
  align-items: center;
  gap: 5px;
  width: 128px;
  padding-left: 6px;
  background: ${({ $active }) => ($active ? colors.teal : "none")};
  color: ${({ $active }) => ($active ? "#fff" : "inherit")};
  font-size: 13px;
`;

const Scene = styled.div`
  flex: 1;
  min-height: 0;
  margin-right: 1px;
  background: linear-gradient(#b2b3b4 0%, #c3c5c6 28%, #d5d6d8 55%, #e5e6e8 82%, #e8e9eb 100%);

  svg {
    width: 100%;
    height: 100%;
  }
`;

const StatusBar = styled.footer`
  display: flex;
  align-items: center;
  justify-content: flex-end;
  gap: 4px;
  height: 22px;
  padding-right: 56px;
`;

const BottomEdge = styled.div`
  height: 8px;
  background: linear-gradient(#fff 1px, #00648a 1px 7px, #d9e2e6 7px);
`;

/* ---------- parts ---------- */

const tabs = [
  ["Assemblies", 93],
  ["Curve", 62],
  ["Surface", 73],
  ["Analysis", 75],
  ["View", 55],
  ["Render", 69],
  ["Tools", 58],
  ["Application", 95],
  ["Developer", 88],
  ["Internal", 73],
];

const Big = ({ icon, lines, w, caret, disabled }) => (
  <BigButton $w={w} disabled={disabled}>
    <BigIcon name={icon} />
    {lines.map((line, i) => (
      <span key={line}>
        {line}
        {caret === "inline" && i === lines.length - 1 && <Caret />}
      </span>
    ))}
    {caret === "below" && (
      <span>
        <Caret />
      </span>
    )}
  </BigButton>
);

const More = ({ icon }) => (
  <BigButton $w={38}>
    <MoreBox>
      <Icon name={icon} />
    </MoreBox>
    <span>More</span>
    <span>
      <Caret />
    </span>
  </BigButton>
);

const Smalls = ({ w, items }) => (
  <SmallColumn $w={w}>
    {items.map(([icon, label, caret]) => (
      <SmallButton key={label}>
        <Icon name={icon} />
        {label}
        {caret && <Caret />}
      </SmallButton>
    ))}
  </SmallColumn>
);

const RibbonGroup = ({ label, w, children }) => (
  <Group $w={w}>
    <GroupBody>{children}</GroupBody>
    <GroupLabel>
      <span>{label}</span>
      <Caret />
    </GroupLabel>
  </Group>
);

const galleryShapes = [
  <Fragment key="profile">
    <path d="M2 1v13q0 5 5 5 4 0 4-5v-2q0-5 5-5 6 0 6 6v2" stroke="#333" strokeWidth="1.300" />
    <Dot x={2} y={13} r={2.200} />
    <Dot x={11} y={13} r={2.200} />
    <Dot x={22} y={13} r={2.200} />
  </Fragment>,
  <Fragment key="rect">
    <path d="M2 6h20v13H2z" stroke="#333" strokeWidth="1.300" />
    <Dot x={2} y={6} r={2.200} />
    <Dot x={22} y={19} r={2.200} />
  </Fragment>,
  <Fragment key="line">
    <path d="M4 20L20 4" stroke="#333" strokeWidth="1.300" />
    <Dot x={4} y={20} r={2.200} />
    <Dot x={20} y={4} r={2.200} />
  </Fragment>,
  <Fragment key="arc">
    <path d="M3 4q17-1 18 16" stroke="#333" strokeWidth="1.300" />
    <Dot x={3} y={4} r={2.200} />
    <Dot x={15.500} y={7.500} r={2.200} />
    <Dot x={21} y={20} r={2.200} />
  </Fragment>,
  <circle key="circle" cx="12" cy="12" r="10" stroke="#333" strokeWidth="1.300" />,
  <path key="point" d="M12 3v18M3 12h18" stroke="#333" strokeWidth="1.400" />,
];

// "v" is a drop-down arrow, "*" marks a snap option that is switched on
const tools = [
  "ghost1", "ghost2", "filter", "v", "ticket", "ghost3", "ghost4", "dotCube", "marquee", "v",
  "facet", "blueCube", "*dots", "*endpoint", "*midpoint", "curvePt", "*zigzag", "*spline",
  "intersect", "*circleC", "quadrant", "*cross", "*onCurve", "face", "grid", "mesh",
];

const renderTool = (name, i) =>
  name === "v" ? (
    <ToolCaret key={i} aria-label="Options">
      <Caret />
    </ToolCaret>
  ) : (
    <Tool key={i} $on={name.startsWith("*")} aria-label={name.replace("*", "")}>
      <Icon name={name.replace("*", "")} />
    </Tool>
  );

const sides = [
  ["assembly", 42],
  ["constraint", 40],
  ["history", 46],
  ["books", 40],
  ["info", 66],
  ["web", 42],
  ["clock", 66],
  ["palette", 20],
  ["process", 62],
  ["tools", 24],
];

const ExpandSign = ({ open }) => (
  <svg width="5" height="5" viewBox="0 0 5 5" aria-hidden="true">
    <path d={open ? "M0 2h5v1H0z" : "M0 2h2V0h1v2h2v1H3v2H2V3H0z"} fill="#111" />
  </svg>
);

const Quick = ({ names }) =>
  names.map((name) =>
    name === "v" ? (
      <Caret key={name} />
    ) : (
      <IconButton key={name} aria-label={name}>
        <Icon name={name} />
      </IconButton>
    )
  );

const branches = [
  { icon: "views", label: "Model Views" },
  { icon: "camera", label: "Cameras", checked: true },
  { icon: "folder", label: "Model History", open: true },
];

const leaves = [
  { icon: "csys", label: "Datum Coordinate ..." },
  { icon: "block", label: "Block (2)", bold: true },
];

const PartNavigator = () => (
  <Panel>
    <PanelTitle>
      Part Navigator
      <svg width="12" height="11" viewBox="0 0 12 11" aria-hidden="true">
        <path d="M.5 1h11v9.500H.5z" fill="#fff" stroke="#111" />
        <path d="M0 1h12" stroke="#111" strokeWidth="2" />
      </svg>
    </PanelTitle>
    <TreeBox>
      <TreeArea>
        <Tree>
          <colgroup>
            <col width="200" />
            <col width="100" />
            <col />
          </colgroup>
          <thead>
            <tr>
              <th>
                <Sorted>
                  Name
                  <svg width="10" height="5" viewBox="0 0 10 5" aria-hidden="true">
                    <path d="M0 5l5-5 5 5z" fill="#111" />
                  </svg>
                </Sorted>
              </th>
              <th>Up to Date</th>
              <th>C</th>
            </tr>
          </thead>
          <tbody>
            {branches.map(({ icon, label, checked, open }) => (
              <tr key={label}>
                <td>
                  <Node>
                    <Expander aria-label={label}>
                      <ExpandSign open={open} />
                    </Expander>
                    {checked && <Check />}
                    <Icon name={icon} />
                    {label}
                  </Node>
                </td>
                <td />
                <td />
              </tr>
            ))}
            {leaves.map(({ icon, label, bold }) => (
              <tr key={label}>
                <td>
                  <Node as="label" $leaf $bold={bold}>
                    <Twig />
                    <Tick>
                      <input type="checkbox" defaultChecked />
                      <Check s={11} />
                    </Tick>
                    <Icon name={icon} />
                    {label}
                  </Node>
                </td>
                <td>
                  <Check />
                </td>
                <td />
              </tr>
            ))}
          </tbody>
        </Tree>
      </TreeArea>
      <ScrollBar>
        <svg width="6" height="9" viewBox="0 0 6 9" fill="none">
          <path d="M5 .5l-4 4 4 4" stroke="#333" strokeWidth="1.600" />
        </svg>
        <i />
        <svg width="6" height="9" viewBox="0 0 6 9" fill="none">
          <path d="M1 .5l4 4-4 4" stroke="#333" strokeWidth="1.600" />
        </svg>
      </ScrollBar>
    </TreeBox>
    <Splitter />
    {["Dependencies", "Details", "Preview"].map((name) => (
      <Section key={name}>
        {name}
        <svg width="11" height="10" viewBox="0 0 11 10" fill="none">
          <path d="M1 .5l4.500 7 4.500-7" stroke={colors.link} strokeWidth="2" />
        </svg>
      </Section>
    ))}
  </Panel>
);

const Model = () => (
  <svg viewBox="365 208 1134 759" fill="none" role="img" aria-label="Block model">
    <path d="M667.500 484L911 409.500 1108.500 501 865.500 574.500z" fill="#bbd8df" />
    <path d="M667.500 484l198 90.500v291L667.500 775z" fill="#6a787b" />
    <path d="M1108.500 501v290.500l-243 74v-291z" fill="#7c8d91" />
    <path
      d="M667.500 484L911 409.500 1108.500 501 865.500 574.500zM667.500 484v291l198 90.500 243-74V501M865.500 574.500v291"
      stroke="#2b3133"
    />

    <path d="M668 735l32-9v38l-32 10M700 764l26 12-31 10M700 764l22-6" stroke="#c0c7c7" />
    <path d="M668 690v84l27 12v-38l-27-13M661 774h13M668 766v15M695 786l20 9" stroke="#8d6e64" />
    <path d="M667 697l3 15h-6z" fill="#4a4644" />
    <path d="M719 755l14 0-13 6z" fill="#e3e6e6" />
    <path d="M707 793l5-2 8 6-9 1z" fill="#7e4436" />
    <text x="733" y="757" fontSize="13" fill="#c6cccc">Y</text>
    <text x="720" y="804" fontSize="12" fill="#a2776c">X</text>
    <text x="664" y="696" fontSize="11" fill="#8a7b77">Z</text>

    <text x="1079" y="359" fontSize="44" fontWeight="350" fontFamily="'Noto Sans CJK SC', sans-serif" fill="#111">
      阿飞
    </text>

    <path d="M428 881l18-6 16 6v23l-18 7-16-8z" fill="#cfd1d2" stroke="#a4a7a8" />
    <path d="M428 881l15 6 19-6M443 887v23M446 875v22l16 7M446 897l-18 6" stroke="#a4a7a8" />
    <path d="M428 903l26-8" stroke="#a3aca3" strokeWidth="2.500" />
    <path d="M452 891l8 2-7 5z" fill="#a3aca3" />
    <path d="M427 902v-26" stroke="#1c54d4" strokeWidth="3" />
    <path d="M427 865l3.500 11h-7z" fill="#1c54d4" />
    <path d="M428 904l17 7" stroke="#d84c2c" strokeWidth="3" />
    <path d="M446 907l7 8-10-1z" fill="#b53c20" />
    <circle cx="427" cy="903" r="3.500" fill="#b9bcbc" stroke="#8b8e8e" />
    <text x="424" y="864" fontSize="11" fill="#1c54d4">Z</text>
    <text x="461" y="896" fontSize="10" fill="#5f8d64">Y</text>
    <text x="453" y="921" fontSize="12" fill="#d84c2c">X</text>
  </svg>
);

const App = () => (
  <>
    <GlobalStyle />
    <Window>
      <TitleBar>
        <Logo>NX</Logo>
        <QuickGroup>
          <Quick names={["newFile", "open", "save"]} />
        </QuickGroup>
        <QuickGroup $tight>
          <Quick names={["undo", "v", "redo"]} />
        </QuickGroup>
        <QuickGroup $tight>
          <Quick names={["cut", "copy", "paste", "target"]} />
        </QuickGroup>
        <QuickGroup $tight>
          <Quick names={["star", "v"]} />
        </QuickGroup>
        <QuickGroup $tight>
          <Quick names={["hand"]} />
        </QuickGroup>
        <QuickGroup $tight>
          <IconButton>
            <Icon name="switchWin" />
            Switch Window
          </IconButton>
          <IconButton>
            <Icon name="windowIcon" />
            Window
            <Caret />
          </IconButton>
          <CaretBar />
        </QuickGroup>
        <AppTitle>NX 12.0.2.9 - Modeling</AppTitle>
        <Brand>SIEMENS</Brand>
        <WindowButtons>
          <IconButton aria-label="Minimize">
            <Svg>
              <path d="M4 13h8" stroke="#333" strokeWidth="1.500" />
            </Svg>
          </IconButton>
          <IconButton aria-label="Maximize">
            <Svg>
              <path d="M2.500 3.500h11v10h-11z" stroke="#333" />
            </Svg>
          </IconButton>
          <IconButton aria-label="Close">
            <Svg>
              <path d="M3 3l10 10M13 3L3 13" stroke="#333" strokeWidth="1.600" />
            </Svg>
          </IconButton>
        </WindowButtons>
      </TitleBar>

      <TabBar>
        <Tab $file $w={60}>File</Tab>
        <Tab $active $w={64}>Home</Tab>
        {tabs.map(([name, w]) => (
          <Tab key={name} $w={w}>{name}</Tab>
        ))}
        <TabTools>
          <SearchBox>
            <input type="text" placeholder="Find a Command" aria-label="Find a Command" />
            <Icon name="search" />
          </SearchBox>
          {["full", "up", "help"].map((name) => (
            <IconButton key={name} aria-label={name}>
              <Icon name={name} size={name === "help" ? 14 : 16} />
            </IconButton>
          ))}
        </TabTools>
      </TabBar>

      <Ribbon>
        <RibbonGroup label="Direct Sketch" w={181}>
          <Big icon="sketch" lines={["Sketch"]} w={48} />
          <Gallery>
            {galleryShapes.map((shape) => (
              <Svg key={shape.key} s={24} v={24}>
                {shape}
              </Svg>
            ))}
          </Gallery>
          <GalleryScroll>
            <svg width="6" height="3" viewBox="0 0 6 3">
              <path d="M0 3l3-3 3 3z" fill="#999" />
            </svg>
            <Caret />
            <CaretBar />
          </GalleryScroll>
        </RibbonGroup>
        <RibbonGroup label="Feature" w={433}>
          <Big icon="datum" lines={["Datum", "Plane"]} w={48} caret="inline" />
          <Big icon="extrude" lines={["Extrude"]} w={48} caret="below" />
          <Big icon="hole" lines={["Hole"]} w={40} />
          <Smalls
            w={115}
            items={[
              ["pattern", "Pattern Feature"],
              ["unite", "Unite", true],
              ["shell", "Shell"],
            ]}
          />
          <Big icon="edge" lines={["Edge", "Blend"]} w={42} caret="inline" />
          <Smalls
            w={91}
            items={[
              ["chamfer", "Chamfer"],
              ["trim", "Trim Body"],
              ["draft", "Draft"],
            ]}
          />
          <More icon="moreFeature" />
        </RibbonGroup>
        <RibbonGroup label="Synchronous Modeling" w={199}>
          <Big icon="moveFace" lines={["Move", "Face"]} w={42} />
          <Smalls
            w={108}
            items={[
              ["offset", "Offset Region"],
              ["replace", "Replace Face"],
              ["deleteFace", "Delete Face"],
            ]}
          />
          <More icon="moreSync" />
        </RibbonGroup>
        <RibbonGroup label="Surface" w={240}>
          <Big icon="curveMesh" lines={["Through", "Curve Mesh"]} w={72} />
          <Smalls
            w={119}
            items={[
              ["curves", "Through Curves"],
              ["swept", "Swept"],
              ["fill", "Fill Surface"],
            ]}
          />
          <More icon="moreSurface" />
        </RibbonGroup>
        <RibbonGroup label="Assemblies" w={255}>
          <Big icon="work" lines={["Work on", "Assembly"]} w={60} disabled />
          <Big icon="addBig" lines={["Add"]} w={40} caret="below" />
          <Smalls
            w={146}
            items={[
              ["constraints", "Assembly Constraints"],
              ["moveComp", "Move Component"],
              ["patternComp", "Pattern Component"],
            ]}
          />
        </RibbonGroup>
        <RibbonGroup label="Analysis" w={68}>
          <Big icon="measure" lines={["Measure"]} w={56} />
        </RibbonGroup>
        <Group $rest>
          <GroupBody />
          <GroupLabel>
            <span />
            <Caret />
          </GroupLabel>
        </Group>
      </Ribbon>

      <SelectionBar>
        <MenuButton>
          <Icon name="menu" />
          <span>
            <u>M</u>enu
          </span>
          <Caret />
        </MenuButton>
        <SelectWrap $w={134} $gap={12}>
          <select aria-label="Selection filter">
            <option>No Selection Filter</option>
          </select>
          <Caret w={8} />
        </SelectWrap>
        <SelectWrap $w={140} $gap={7}>
          <select aria-label="Selection scope">
            <option>Entire Assembly</option>
          </select>
          <Caret w={8} />
        </SelectWrap>
        <ToolStrip $left={5}>{tools.map(renderTool)}</ToolStrip>
        <ToolStrip $left={7}>{["add", "addNew", "tree", "patternComp", "mirror"].map(renderTool)}</ToolStrip>
        <EndCaret aria-label="Toolbar options">
          <Caret />
        </EndCaret>
      </SelectionBar>

      <Main>
        <SideBar>
          <SideButton $h={26} $after={16} aria-label="Settings">
            <Icon name="gear" size={15} />
          </SideButton>
          {sides.map(([name, h]) => (
            <SideButton key={name} $h={h} $wide $active={name === "history"} aria-label={name}>
              <Svg s={23} v={23}>{sideIcons[name]}</Svg>
            </SideButton>
          ))}
        </SideBar>
        <PartNavigator />
        <Work>
          <FileTabs>
            {["model1.prt", "model2.prt", "model3.prt"].map((name, i) => (
              <FileTab key={name} $active={i === 0}>
                <Icon name="part" size={15} />
                {name}
                <svg width="11" height="12" viewBox="0 0 11 12" fill="none">
                  <path d="M9 4V2H1.500v9H7M3.500 1.200h3.500M10.500 5L6.500 8.500M6 7v2h2" stroke={i === 0 ? "#fff" : "#222"} strokeWidth="1.300" />
                </svg>
                {i === 0 && (
                  <svg width="9" height="9" viewBox="0 0 9 9" fill="none">
                    <path d="M1 1l7 7M8 1L1 8" stroke="#fff" strokeWidth="1.800" />
                  </svg>
                )}
              </FileTab>
            ))}
          </FileTabs>
          <Scene>
            <Model />
          </Scene>
        </Work>
      </Main>

      <StatusBar>
        <Icon name="raster" />
        <Icon name="full" />
      </StatusBar>
      <BottomEdge />
    </Window>
  </>
);

export default App;
